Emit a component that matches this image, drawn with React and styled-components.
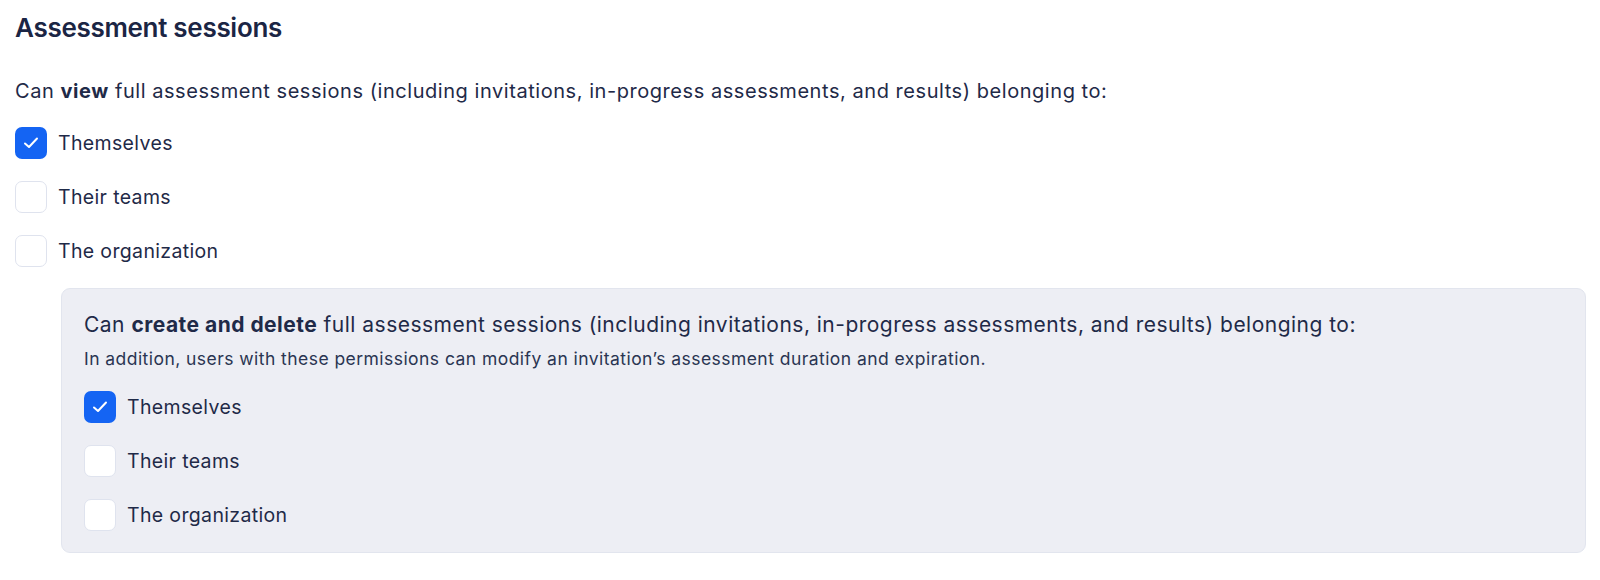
import React from 'react';
import styled, { createGlobalStyle } from 'styled-components';

const GlobalStyle = createGlobalStyle`
    body {
        margin: 0;
        background: #ffffff;
        font-family: Inter, "Liberation Sans", sans-serif;
        color: #1b2544;
    }
`;

const Page = styled.div`
    padding: 12px 14px 0 15px;
`;

const Title = styled.h2`
    margin: 0;
    font-size: 26px;
    line-height: 32px;
    font-weight: 600;
    letter-spacing: -0.3px;
    color: #1b2544;
`;

const Lead = styled.p`
    margin: ${(p) => p.$top || 0}px 0 0;
    font-size: ${(p) => p.$size || 20}px;
    line-height: 28px;
    letter-spacing: ${(p) => p.$spacing || 0.55}px;
    color: #1f2a48;

    b {
        font-weight: 700;
    }
`;

const Hint = styled.p`
    margin: 8px 0 0;
    font-size: 17.5px;
    line-height: 24px;
    letter-spacing: 0.45px;
    color: #2a3552;
`;

const List = styled.div`
    display: flex;
    flex-direction: column;
    gap: 22px;
    margin-top: ${(p) => p.$top}px;
`;

const Row = styled.label`
    display: flex;
    align-items: center;
    gap: 11px;
    font-size: 19.5px;
    letter-spacing: 0.35px;
    color: #1f2a48;
`;

const Box = styled.span`
    flex: none;
    width: 32px;
    height: 32px;
    box-sizing: border-box;
    border-radius: 7px;
    display: flex;
    align-items: center;
    justify-content: center;
    background: ${(p) => (p.$checked ? '#1464f3' : '#ffffff')};
    border: ${(p) => (p.$checked ? 'none' : '1.5px solid #dfe3ee')};
`;

const Panel = styled.div`
    margin: 21px 0 0 46px;
    padding: 22px 22px 21px;
    background: #edeef4;
    border: 1px solid #e2e5ee;
    border-radius: 9px;
`;

const Check = () => (
    <svg width="20" height="20" viewBox="0 0 20 20" fill="none">
        <path d="M4 10.5 L8 14 L16 5.5" stroke="#fff" strokeWidth="2" strokeLinecap="round" strokeLinejoin="round" />
    </svg>
);

const OPTIONS = ['Themselves', 'Their teams', 'The organization'];

const Options = ({ checked, top }) => (
    <List $top={top}>
        {OPTIONS.map((label) => (
            <Row key={label}>
                <Box $checked={checked === label}>{checked === label && <Check />}</Box>
                {label}
            </Row>
        ))}
    </List>
);

export default function App() {
    return (
        <Page>
            <GlobalStyle />
            <Title>Assessment sessions</Title>
            <Lead $top={33}>
                Can <b>view</b> full assessment sessions (including invitations, in-progress assessments, and results) belonging to:
            </Lead>
            <Options checked="Themselves" top={22} />
            <Panel>
                <Lead $size={21} $spacing={0.48}>
                    Can <b>create and delete</b> full assessment sessions (including invitations, in-progress assessments, and results) belonging to:
                </Lead>
                <Hint>In addition, users with these permissions can modify an invitation’s assessment duration and expiration.</Hint>
                <Options checked="Themselves" top={20} />
            </Panel>
        </Page>
    );
}
